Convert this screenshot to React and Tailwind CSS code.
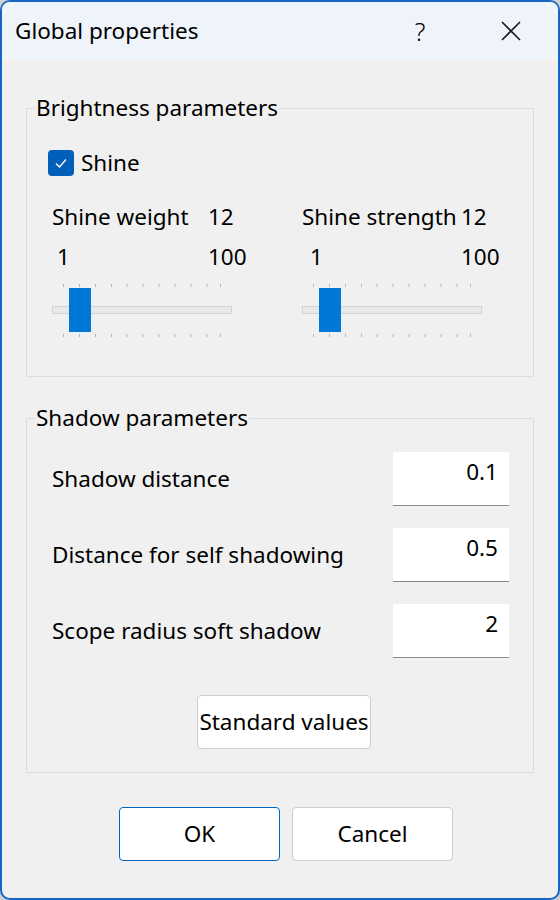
import React from "react";

const font = { fontFamily: '"Noto Sans", "Open Sans", sans-serif' };

function Slider({ pos }) {
  const ticks = [0, 16, 32, 48, 63.5, 79.5, 95.5, 111.5, 127.5, 143.5, 157];
  return (
    <div className="relative w-[180px] h-[55px]">
      <svg className="absolute left-0 top-0" width="180" height="55">
        {ticks.map((t, i) => (
          <g key={i}>
            <rect x={11 + t} y={1} width={1} height={3} fill="#b4b4b4" />
            <rect x={11 + t} y={51} width={1} height={3} fill="#b4b4b4" />
          </g>
        ))}
      </svg>
      <div className="absolute left-0 right-0 top-[23px] h-[8px] bg-[#e6e8ea] border border-[#d4d4d4]" />
      <div
        className="absolute top-[5px] w-[22px] h-[44px] bg-[#0078d7]"
        style={{ left: pos }}
      />
    </div>
  );
}

function Field({ label, value }) {
  return (
    <div className="flex items-center justify-between h-[54px]">
      <span className="text-[22.5px] leading-[30px] text-black">{label}</span>
      <div className="w-[116px] h-[54px] bg-white border-b border-[#8a8a8a] flex justify-end pr-[11px] pt-[5px] text-[22.5px] leading-[30px]">
        {value}
      </div>
    </div>
  );
}

export default function App() {
  return (
    <div className="w-[560px] h-[900px] bg-[#cfcfcf]" style={font}>
      <div className="w-[560px] h-[900px] border-2 border-[#1666c7] rounded-[10px] overflow-hidden bg-[#f0f0f0] flex flex-col text-black">
        <div className="h-[58px] bg-[#eff4fa] flex items-center pl-[13px] shrink-0">
          <span className="text-[22.5px] leading-[30px] flex-1">Global properties</span>
          <span className="text-[25px] leading-[30px] w-[20px] mr-[70px] text-center font-light">?</span>
          <svg width="22" height="22" viewBox="0 0 22 22" className="mr-[36px]">
            <path d="M2 2 L20 20 M20 2 L2 20" stroke="#1a1a1a" strokeWidth="1.6" />
          </svg>
        </div>
        <div className="flex-1 px-[24px] pt-[33px]">
          <fieldset className="border border-[#dcdcdc] px-[8px] pb-0 m-0 h-[284px] min-w-0">
            <legend className="text-[22.5px] leading-[30px] px-[1px]">Brightness parameters</legend>
            <div className="pl-[17px] pt-[25px]">
              <div className="flex items-center gap-[7px] h-[30px] -ml-[4px]">
                <div className="w-[26px] h-[26px] rounded-[4px] bg-[#005fb8] flex items-center justify-center">
                  <svg width="14" height="14" viewBox="0 0 14 14">
                    <path d="M2 7.5 L5.5 11 L12 3.5" fill="none" stroke="white" strokeWidth="1.4" />
                  </svg>
                </div>
                <span className="text-[22.5px] leading-[30px]">Shine</span>
              </div>
              <div className="flex mt-[24px]">
                <div className="w-[250px]">
                  <div className="flex h-[30px] text-[22.5px] leading-[30px]">
                    <span className="w-[156px]">Shine weight</span>
                    <span>12</span>
                  </div>
                  <div className="flex h-[30px] text-[22.5px] leading-[30px] mt-[10px]">
                    <span className="w-[156px] pl-[5px]">1</span>
                    <span>100</span>
                  </div>
                  <div className="mt-[11px]">
                    <Slider pos={17} />
                  </div>
                </div>
                <div className="w-[200px]">
                  <div className="flex h-[30px] text-[22.5px] leading-[30px]">
                    <span className="w-[159px] whitespace-nowrap">Shine strength</span>
                    <span>12</span>
                  </div>
                  <div className="flex h-[30px] text-[22.5px] leading-[30px] mt-[10px]">
                    <span className="w-[159px] pl-[8px]">1</span>
                    <span>100</span>
                  </div>
                  <div className="mt-[11px]">
                    <Slider pos={17} />
                  </div>
                </div>
              </div>
            </div>
          </fieldset>
          <fieldset className="border border-[#dcdcdc] px-[8px] m-0 mt-[26px] h-[370px] min-w-0">
            <legend className="text-[22.5px] leading-[30px] px-[1px]">Shadow parameters</legend>
            <div className="pl-[17px] pr-[16px] pt-[19px] flex flex-col gap-[22px]">
              <Field label="Shadow distance" value="0.1" />
              <Field label="Distance for self shadowing" value="0.5" />
              <Field label="Scope radius soft shadow" value="2" />
            </div>
            <div className="flex justify-center mt-[37px] pl-[8px]">
              <button className="w-[174px] h-[54px] bg-white border border-[#cccccc] rounded-[4px] text-[22.5px] leading-[30px]">
                Standard values
              </button>
            </div>
          </fieldset>
          <div className="flex justify-center gap-[12px] mt-[34px] pl-[12px]">
            <button className="w-[161px] h-[54px] bg-white border border-[#0067c0] rounded-[4px] text-[22.5px] leading-[30px]">
              OK
            </button>
            <button className="w-[161px] h-[54px] bg-white border border-[#cccccc] rounded-[4px] text-[22.5px] leading-[30px]">
              Cancel
            </button>
          </div>
        </div>
      </div>
    </div>
  );
}
